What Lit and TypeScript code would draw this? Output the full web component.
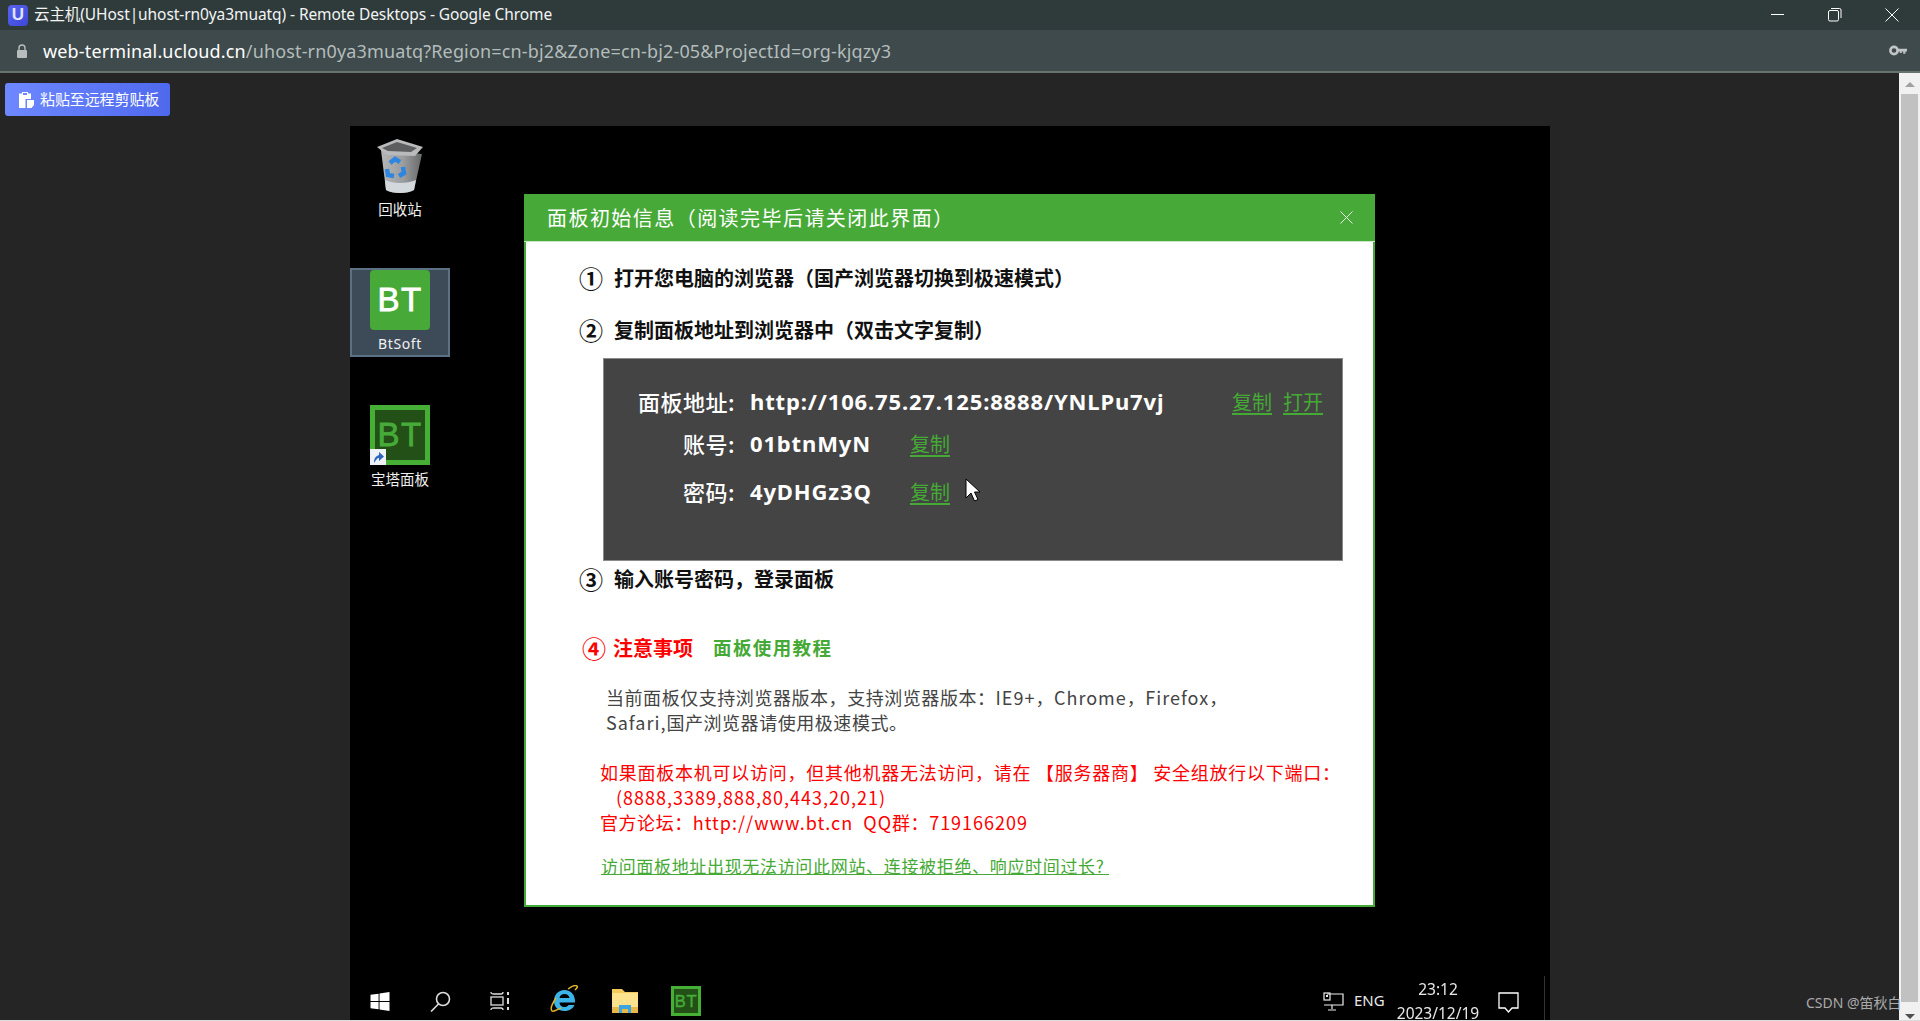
import { LitElement, html, css, svg } from "lit";
import { customElement } from "lit/decorators.js";

const btLogo = (fill: string) => svg`<text x="30" y="41" text-anchor="middle" font-family="Liberation Sans, sans-serif" font-size="33" fill="${fill}" stroke="${fill}" stroke-width=".8" letter-spacing="1.5">BT</text>`;

@customElement("app-root")
export class AppRoot extends LitElement {
  static styles = css`
    :host { display: block; width: 1920px; height: 1021px; overflow: hidden; font-family: "Noto Sans", "Noto Sans CJK SC", sans-serif; background: #252526; }
    .page { display: flex; flex-direction: column; height: 1021px; position: relative; }
    .title { height: 30px; background: #2f3a3a; color: #f2f4f4; display: flex; align-items: center; font-size: 15.5px; flex: none; }
    .favicon { width: 20px; height: 21px; margin-left: 8px; margin-right: 6px; border-radius: 4px; background: linear-gradient(135deg, #5a64ee, #3d46d8); color: #dfe4ff; font: bold 17px "Liberation Sans", sans-serif; display: flex; align-items: center; justify-content: center; }
    .title-text { flex: 1; white-space: nowrap; letter-spacing: -0.08px; padding-bottom: 3px; }
    .winbtn { width: 57px; height: 30px; display: flex; align-items: center; justify-content: center; }
    .url { height: 41px; background: #3e4a4b; display: flex; align-items: center; flex: none; font-size: 18px; white-space: nowrap; letter-spacing: 0.15px; }
    .lock { margin-left: 16px; margin-right: 15px; }
    .host { color: #fff; }
    .path { color: #b4bcbc; flex: 1; }
    .key { margin-right: 13px; }
    .sep { height: 2px; background: #66736f; flex: none; }
    .main { flex: 1; display: flex; min-height: 0; }
    .content { flex: 1; display: flex; flex-direction: column; background: #252526; min-width: 0; }
    .toolbar { height: 53px; flex: none; padding: 10px 0 0 5px; box-sizing: border-box; }
    .paste { width: 165px; height: 33px; box-sizing: border-box; border-radius: 3px; background: linear-gradient(90deg, #6d88ff, #4f69ee); color: #fff; font-size: 15px; display: flex; align-items: center; padding-left: 13px; gap: 5px; font-family: "Noto Sans CJK SC", sans-serif; letter-spacing: -0.1px; }
    .paste span { padding-bottom: 3px; }
    .desktop { margin-left: 350px; width: 1200px; flex: 1; background: #000; position: relative; display: flex; flex-direction: column; justify-content: flex-end; filter: blur(0.35px); }
    .dicon { position: absolute; width: 100px; display: flex; flex-direction: column; align-items: center; color: #f0f0f0; font-size: 14.5px; font-family: "Noto Sans CJK SC", sans-serif; line-height: 20px; box-sizing: border-box; }
    .dicon.sel { background: #3d4b59; border: 2px solid #5d7184; height: 89px; }
    .bticon { display: block; }
    .shortcut { position: absolute; left: 20px; top: 44px; width: 16px; height: 16px; }
    .dialog { position: absolute; left: 174px; top: 68px; width: 851px; height: 713px; box-sizing: border-box; background: #fff; border: 2px solid #43aa37; border-top: none; font-family: "Noto Sans CJK SC", sans-serif; }
    .dhead { height: 48px; background: #47aa38; color: #fff; margin: 0 -2px; display: flex; align-items: center; justify-content: space-between; padding: 0 22px 0 23px; font-size: 20px; letter-spacing: 1.45px; border-bottom: 1px solid #c9e6c4; box-sizing: border-box; }
    .step { height: 30px; display: flex; align-items: center; padding-left: 53px; font-size: 20px; font-weight: 700; color: #111; line-height: 30px; white-space: nowrap; }
    .num { width: 35px; flex: none; font-size: 24px; font-weight: 700; }
    .s1 { margin-top: 21px; }
    .s2 { margin-top: 22px; }
    .box { margin: 13px 0 0 77px; width: 740px; height: 203px; box-sizing: border-box; background: #444; border: 1px solid #8a8a8a; padding-top: 27px; color: #fff; }
    .row { height: 30px; display: flex; align-items: center; font-size: 22px; font-weight: 500; white-space: nowrap; }
    .row2 { margin-top: 12px; }
    .row3 { margin-top: 18px; }
    .lab { width: 131px; text-align: right; flex: none; letter-spacing: 0.5px; }
    .val { margin-left: 15px; font-family: "Noto Sans", sans-serif; font-weight: 700; font-size: 22px; letter-spacing: 0.85px; }
    .w1 { width: 482px; flex: none; }
    .w2 { width: 160px; flex: none; }
    a.lk { color: #45a935; text-decoration: underline; text-underline-offset: 3px; font-weight: 400; font-size: 20px; }
    .gap { margin-left: 11px; }
    .s3 { margin-top: 3px; }
    .s4 { margin-top: 39px; padding-left: 56px; color: #f00; }
    .s4 .num { width: 31px; }
    .tut { color: #45a935; margin-left: 20px; font-size: 18.5px; letter-spacing: 1.4px; position: relative; top: -1px; }
    .note { font-size: 18px; line-height: 25px; white-space: nowrap; letter-spacing: 0.55px; }
    .lat { letter-spacing: 1px; }
    .gray { margin: 22px 0 0 80px; color: #444; }
    .red { margin: 25px 0 0 74px; color: #f00; }
    .r1 { letter-spacing: 0.75px; }
    .ind { padding-left: 16px; }
    .fixlink { display: block; margin: 18px 0 0 75px; color: #45a935; font-size: 17px; letter-spacing: 0.67px; line-height: 25px; text-decoration: underline; white-space: nowrap; }
    .taskbar { height: 50px; flex: none; position: relative; display: flex; color: #e8e8e8; font-size: 15px; }
    .tb { position: absolute; }
    .clock { position: absolute; left: 1036px; width: 104px; top: 12px; display: flex; flex-direction: column; align-items: center; gap: 10px; line-height: 14px; font-size: 15.5px; font-family: "Noto Sans", sans-serif; }
    .eng { position: absolute; left: 1004px; top: 19px; font-size: 15px; line-height: 22px; font-family: "Noto Sans", sans-serif; }
    .tsep { position: absolute; left: 1194px; top: 6px; width: 1px; height: 44px; background: #333; }
    .scroll { width: 21px; background: #f1f1f1; flex: none; position: relative; }
    .thumb { position: absolute; left: 2px; right: 2px; top: 21px; height: 908px; background: #c1c1c1; }
    .up { position: absolute; left: 6px; top: 9px; width: 0; height: 0; border: 5px solid transparent; border-top: none; border-bottom: 5px solid #a0a0a0; }
    .down { position: absolute; left: 6px; bottom: 1px; width: 0; height: 0; border: 5px solid transparent; border-bottom: none; border-top: 5px solid #505050; }
    .bottom { height: 1px; background: #dcdcdc; flex: none; }
    .wm { position: absolute; left: 1806px; top: 993px; color: #aaa; font-size: 14px; line-height: 20px; font-family: "Noto Sans", "Noto Sans CJK SC", sans-serif; white-space: nowrap; }
    .cursor { position: absolute; left: 615px; top: 352px; }
  `;

  render() {
    return html`<div class="page">
      <div class="title">
        <div class="favicon">U</div>
        <div class="title-text">云主机(UHost|uhost-rn0ya3muatq) - Remote Desktops - Google Chrome</div>
        <div class="winbtn"><svg width="14" height="2"><rect width="13" height="1" fill="#fff"/></svg></div>
        <div class="winbtn"><svg width="14" height="14" fill="none" stroke="#fff"><rect x=".5" y="2.500" width="10" height="10.500" rx="1.500"/><path d="M3 .5h8.500a1.500 1.500 0 0 1 1.500 1.500v8"/></svg></div>
        <div class="winbtn"><svg width="14" height="14" stroke="#fff" fill="none"><path d="M.5.5l13 13M13.500.5l-13 13"/></svg></div>
      </div>
      <div class="url">
        <svg class="lock" width="12" height="14" viewBox="0 0 12 14"><path d="M3 6V4a3 3 0 0 1 6 0v2" fill="none" stroke="#b8bcbc" stroke-width="1.400"/><rect x="1" y="6" width="10" height="8" rx="1" fill="#b8bcbc"/></svg>
        <span class="host">web-terminal.ucloud.cn</span><span class="path">/uhost-rn0ya3muatq?Region=cn-bj2&amp;Zone=cn-bj2-05&amp;ProjectId=org-kjqzy3</span>
        <svg class="key" width="18" height="11" viewBox="0 0 18 11"><circle cx="5" cy="5.500" r="3.600" fill="none" stroke="#c2c5c5" stroke-width="2.600"/><path d="M8 3.800h10v2.600h-1.600v2.400h-2.200V6.400h-1.400v1.600h-2V6.400H8z" fill="#c2c5c5"/></svg>
      </div>
      <div class="sep"></div>
      <div class="main">
        <div class="content">
          <div class="toolbar">
            <div class="paste">
              <svg width="17" height="19" viewBox="0 0 17 19"><path d="M1 3.500h3V2h6v1.500h3V9H7.500v9H1z" fill="#fff"/><rect x="5" y="3" width="4" height="2" fill="#6d88ff"/><path d="M9 10h7v5l-2.500 3H9z" fill="#fff"/></svg>
              <span>粘贴至远程剪贴板</span>
            </div>
          </div>
          <div class="desktop">
            <div class="dicon" style="left:0;top:12px">
              <svg width="48" height="56" viewBox="0 0 48 56">
                <defs><linearGradient id="bin" x1="0" x2="1" y1="0" y2="0"><stop offset="0" stop-color="#b4b6b8"/><stop offset=".55" stop-color="#9a9c9e"/><stop offset="1" stop-color="#66686a"/></linearGradient></defs>
                <path d="M5 12l5 40c6 4 22 4 28 0l8-36z" fill="url(#bin)"/>
                <path d="M1 9L21 1l26 8-8 9-28-1z" fill="#b8babc"/>
                <path d="M6 10l15-6 20 6-6 4-23-1z" fill="#5c5e60"/>
                <path d="M9 42c8 4 22 4 31 0l-2 10c-6 4-22 4-28 0z" fill="#d3d8dc"/>
                <g fill="none" stroke="#2f86e0" stroke-width="4.500"><path d="M14 25l5-4 5 3"/><path d="M27 29l1 6-5 3"/><path d="M18 38l-6-1-1-6"/></g>
              </svg>
              <div style="margin-top:5px">回收站</div>
            </div>
            <div class="dicon sel" style="left:0;top:142px">
              <svg class="bticon" width="60" height="60" viewBox="0 0 60 60"><rect width="60" height="60" rx="4" fill="#47aa38"/>${btLogo("#fff")}</svg>
              <div style="margin-top:4px;font-family:'Noto Sans',sans-serif;font-size:14px;letter-spacing:.6px">BtSoft</div>
            </div>
            <div class="dicon" style="left:0;top:279px">
              <svg class="bticon" width="60" height="60" viewBox="0 0 60 60"><rect x="2.500" y="2.500" width="55" height="55" fill="#225016" stroke="#46b036" stroke-width="5"/>${btLogo("#46ab38")}</svg>
              <svg class="shortcut" viewBox="0 0 16 16"><rect width="16" height="16" fill="#eef1f5"/><path d="M4 14c0-5 2-7 5-8V3l5 4.500-5 4.500V9c-2 0-3 2-5 5z" fill="#2a66c0"/></svg>
              <div style="margin-top:4px">宝塔面板</div>
            </div>
            <div class="dialog">
              <div class="dhead"><span>面板初始信息（阅读完毕后请关闭此界面）</span>
                <svg width="13" height="13" stroke="#e8f4e6" fill="none"><path d="M.5.500l12 12M12.500.5l-12 12"/></svg></div>
              <div class="step s1"><span class="num">①</span>打开您电脑的浏览器（国产浏览器切换到极速模式）</div>
              <div class="step s2"><span class="num">②</span>复制面板地址到浏览器中（双击文字复制）</div>
              <div class="box">
                <div class="row"><span class="lab">面板地址:</span><span class="val w1">http://106.75.27.125:8888/YNLPu7vj</span><a class="lk">复制</a><a class="lk gap">打开</a></div>
                <div class="row row2"><span class="lab">账号:</span><span class="val w2">01btnMyN</span><a class="lk">复制</a></div>
                <div class="row row3"><span class="lab">密码:</span><span class="val w2">4yDHGz3Q</span><a class="lk">复制</a></div>
              </div>
              <div class="step s3"><span class="num">③</span>输入账号密码，登录面板</div>
              <div class="step s4"><span class="num">④</span>注意事项<span class="tut">面板使用教程</span></div>
              <div class="note gray">当前面板仅支持浏览器版本，支持浏览器版本：<span class="lat">IE9+</span>，<span class="lat">Chrome</span>，<span class="lat">Firefox</span>，<br><span class="lat">Safari,</span>国产浏览器请使用极速模式。</div>
              <div class="note red"><span class="r1">如果面板本机可以访问，但其他机器无法访问，请在 【服务器商】 安全组放行以下端口：</span><br><span class="ind lat">(8888,3389,888,80,443,20,21)</span><br>官方论坛：<span class="lat">http://www.bt.cn&nbsp; QQ</span>群：<span class="lat">719166209</span></div>
              <a class="fixlink">访问面板地址出现无法访问此网站、连接被拒绝、响应时间过长?&nbsp;</a>
            </div>
            <svg class="cursor" width="16" height="25" viewBox="0 0 16 25"><path d="M1 1v19l5-5 3.500 8 3.500-1.500L9.500 14H15z" fill="#fff" stroke="#000"/></svg>
            <div class="taskbar">
              <svg class="tb" style="left:20px;top:22px" width="20" height="19" viewBox="0 0 20 20" fill="#fff"><path d="M0 3l8.500-1.200v7.700H0zM9.500 1.600L20 0v9.500H9.500zM0 10.500h8.500v7.700L0 17zM9.500 10.500H20V20L9.500 18.400z"/></svg>
              <svg class="tb" style="left:80px;top:21px" width="21" height="21" viewBox="0 0 21 21" fill="none" stroke="#ddd" stroke-width="1.600"><circle cx="13" cy="8" r="6.500"/><path d="M8.500 13L1 20.500"/></svg>
              <svg class="tb" style="left:140px;top:21px" width="20" height="20" viewBox="0 0 20 20" fill="none" stroke="#ddd" stroke-width="1.300"><path d="M1 1c0 2 1 2 3 2h7c1 0 2 0 2-2M1 19c0-2 1-2 3-2h7c1 0 2 0 2 2"/><rect x="1" y="6" width="12" height="8"/><path d="M18 1v3M18 7v6M18 16v3" stroke-width="2"/></svg>
              <svg class="tb" style="left:200px;top:15px" width="29" height="29" viewBox="0 0 29 29">
                <path d="M14.500 5C8 5 4 10 4 16s4 10 10.500 10c5 0 8.500-2.500 10-6h-6c-1 1.500-2.500 2-4 2-3 0-5-2-5-4.500h15.500C25.500 10 21 5 14.500 5zM9.500 13c.3-2.500 2.500-4 5-4s4.500 1.500 5 4z" fill="#3db4e8"/>
                <path d="M25 5c2-2 3-3 2-4-1.500-1-5 0-9 3M6 13c-4 6-6 11-4 13 1.500 1 5-1 9-3" fill="none" stroke="#e4b32a" stroke-width="1.500"/>
              </svg>
              <svg class="tb" style="left:261px;top:19px" width="28" height="24" viewBox="0 0 28 24">
                <path d="M1 0h10l3 3h13v19H1z" fill="#f4c95c"/><rect x="1" y="4" width="26" height="15" fill="#fce28c"/><rect x="1" y="18" width="26" height="6" fill="#e8b84a"/><path d="M8 16h12v8h-3v-4h-6v4H8z" fill="#3ca4de"/>
              </svg>
              <svg class="tb" style="left:321px;top:16px" width="30" height="30" viewBox="0 0 60 60"><rect x="3" y="3" width="54" height="54" fill="#225016" stroke="#46b036" stroke-width="6"/>${btLogo("#46ab38")}</svg>
              <svg class="tb" style="left:973px;top:22px" width="21" height="20" viewBox="0 0 21 20" fill="none" stroke="#eee" stroke-width="1.200"><path d="M4 2h16v11H1"/><rect x="1" y="1" width="6" height="7"/><path d="M9 13v4M5 18h8"/><rect x="3" y="3" width="2" height="2" fill="#eee" stroke="none"/></svg>
              <span class="eng">ENG</span>
              <div class="clock"><span>23:12</span><span>2023/12/19</span></div>
              <svg class="tb" style="left:1148px;top:22px" width="21" height="22" viewBox="0 0 21 22" fill="none" stroke="#fff" stroke-width="1.300"><path d="M1 1h19v15h-6l-3.500 4-3.500-4H1z"/></svg>
              <div class="tsep"></div>
            </div>
          </div>
        </div>
        <div class="scroll"><div class="up"></div><div class="thumb"></div><div class="down"></div></div>
      </div>
      <div class="bottom"></div>
      <div class="wm">CSDN @笛秋白</div>
    </div>`;
  }
}
